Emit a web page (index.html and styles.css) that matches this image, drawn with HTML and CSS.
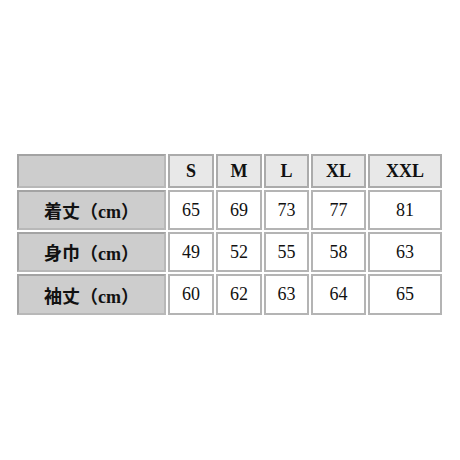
FILE: index.html
```html
<!DOCTYPE html>
<html lang="ja">
<head>
<meta charset="utf-8">
<link rel="stylesheet" href="styles.css">
</head>
<body>
<div class="page">
  <div class="size-table">
    <div class="cell label"></div>
    <div class="cell head">S</div>
    <div class="cell head">M</div>
    <div class="cell head">L</div>
    <div class="cell head">XL</div>
    <div class="cell head">XXL</div>

    <div class="cell label">着丈（cm）</div>
    <div class="cell val">65</div>
    <div class="cell val">69</div>
    <div class="cell val">73</div>
    <div class="cell val">77</div>
    <div class="cell val">81</div>

    <div class="cell label">身巾（cm）</div>
    <div class="cell val">49</div>
    <div class="cell val">52</div>
    <div class="cell val">55</div>
    <div class="cell val">58</div>
    <div class="cell val">63</div>

    <div class="cell label">袖丈（cm）</div>
    <div class="cell val">60</div>
    <div class="cell val">62</div>
    <div class="cell val">63</div>
    <div class="cell val">64</div>
    <div class="cell val">65</div>
  </div>
</div>
</body>
</html>
```

FILE: styles.css
```css
html, body {
  margin: 0;
  padding: 0;
  background: #ffffff;
}

.page {
  width: 460px;
  height: 460px;
  box-sizing: border-box;
  padding: 154px 0 0 17px;
}

.size-table {
  display: grid;
  grid-template-columns: 149px 46px 46px 45px 55px 74px;
  grid-template-rows: 34px 40px 40px 41px;
  gap: 2px;
  font-family: "Liberation Serif", "Noto Sans CJK JP", serif;
  color: #111111;
}

.cell {
  box-sizing: border-box;
  border: 2px solid #ababab;
  display: flex;
  align-items: center;
  justify-content: center;
}

.label {
  background: #cdcdcd;
  font-weight: bold;
  font-size: 18px;
  border-color: #a3a3a3 #b8b8b8 #b8b8b8 #a3a3a3;
}

.head {
  background: #e8e8e8;
  font-weight: bold;
  font-size: 18px;
}

.val {
  background: #ffffff;
  font-size: 18px;
  border-color: #b4b4b4;
}
```
